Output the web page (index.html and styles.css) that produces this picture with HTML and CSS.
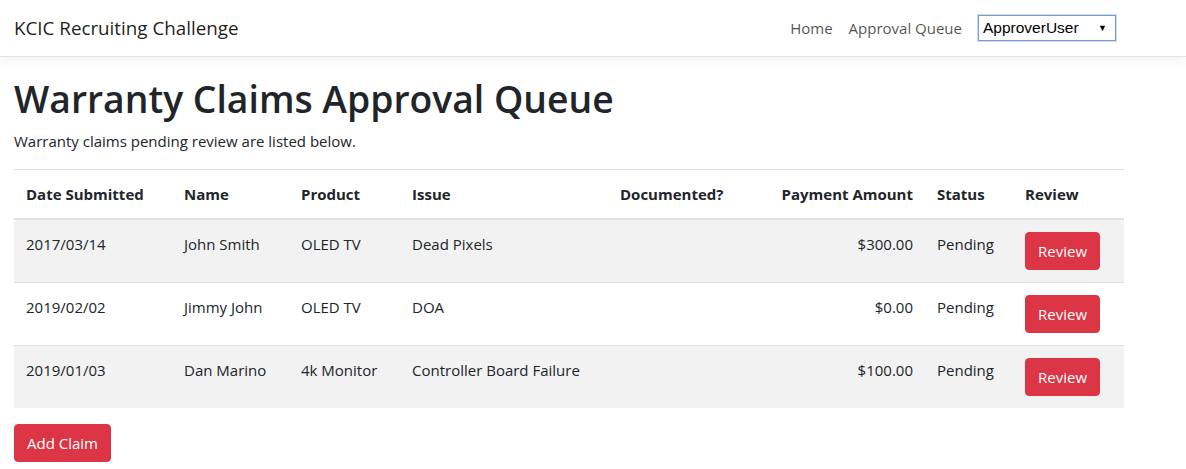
FILE: index.html
```html
<!DOCTYPE html>
<html lang="en">
<head>
<meta charset="utf-8">
<title>Warranty Claims Approval Queue</title>
<link rel="stylesheet" href="styles.css">
</head>
<body>
<header class="navbar">
  <a class="brand" href="#">KCIC Recruiting Challenge</a>
  <nav class="nav">
    <a class="nav-link" href="#">Home</a>
    <a class="nav-link" href="#">Approval Queue</a>
    <div class="user-select">
      <span class="user-select-value">ApproverUser</span>
      <span class="user-select-arrow">▼</span>
    </div>
  </nav>
</header>
<main class="main">
  <h1 class="title">Warranty Claims Approval Queue</h1>
  <p class="lead">Warranty claims pending review are listed below.</p>
  <table class="claims">
    <colgroup>
      <col class="c-date"><col class="c-name"><col class="c-product"><col class="c-issue">
      <col class="c-doc"><col class="c-amount"><col class="c-status"><col class="c-review">
    </colgroup>
    <thead>
      <tr>
        <th>Date Submitted</th><th>Name</th><th>Product</th><th>Issue</th>
        <th>Documented?</th><th class="num">Payment Amount</th><th>Status</th><th>Review</th>
      </tr>
    </thead>
    <tbody>
      <tr>
        <td>2017/03/14</td><td>John Smith</td><td>OLED TV</td><td>Dead Pixels</td>
        <td></td><td class="num">$300.00</td><td>Pending</td><td><button class="btn">Review</button></td>
      </tr>
      <tr>
        <td>2019/02/02</td><td>Jimmy John</td><td>OLED TV</td><td>DOA</td>
        <td></td><td class="num">$0.00</td><td>Pending</td><td><button class="btn">Review</button></td>
      </tr>
      <tr>
        <td>2019/01/03</td><td>Dan Marino</td><td>4k Monitor</td><td>Controller Board Failure</td>
        <td></td><td class="num">$100.00</td><td>Pending</td><td><button class="btn">Review</button></td>
      </tr>
    </tbody>
  </table>
  <button class="btn">Add Claim</button>
</main>
</body>
</html>
```

FILE: styles.css
```css
* { box-sizing: border-box; }
html, body { margin: 0; padding: 0; }
body {
  font-family: "Open Sans", "Noto Sans", sans-serif;
  font-size: 15px;
  line-height: 24px;
  color: #212529;
  background: #fff;
}
.navbar {
  height: 57px;
  display: flex;
  align-items: center;
  justify-content: space-between;
  padding: 0 70px 0 14px;
  border-bottom: 1px solid #dee2e6;
  box-shadow: 0 4px 12px rgba(0,0,0,.05);
}
.brand {
  font-size: 18.8px;
  color: rgba(0,0,0,.9);
  text-decoration: none;
  line-height: 30px;
}
.nav { display: flex; align-items: center; }
.nav-link {
  color: rgba(0,0,0,.7);
  text-decoration: none;
  padding: 0 8px;
  font-size: 15px;
}
.user-select {
  margin-left: 8px;
  width: 138px;
  height: 26px;
  border: 1px solid #7a9bd9;
  box-shadow: 0 0 0 1px rgba(110,150,230,.35);
  display: flex;
  align-items: center;
  justify-content: space-between;
  padding: 0 8px 0 4px;
  font-family: "Liberation Sans", Arial, sans-serif;
  font-size: 15.5px;
  color: #000;
}
.user-select-arrow { font-size: 9px; }
.main { padding: 16px 14px 0; }
.title {
  margin: 2px 0 6px;
  font-size: 37.3px;
  font-weight: 600;
  line-height: 48px;
}
.lead { margin: 0 0 16px; }
.claims {
  width: 1110px;
  table-layout: fixed;
  border-collapse: collapse;
  margin-bottom: 16px;
}
.c-date { width: 158px; }
.c-name { width: 117px; }
.c-product { width: 111px; }
.c-issue { width: 208px; }
.c-doc { width: 147px; }
.c-amount { width: 170px; }
.c-status { width: 88px; }
.c-review { width: 111px; }
.claims th, .claims td {
  padding: 12px;
  text-align: left;
  vertical-align: top;
  border-top: 1px solid #dee2e6;
}
.claims th { font-weight: 700; border-bottom: 2px solid #dee2e6; }
.claims tbody tr:nth-child(odd) { background: #f2f2f2; }
.claims .num { text-align: right; }
.btn {
  font-family: inherit;
  font-size: 15px;
  line-height: 24px;
  padding: 6px 12px;
  border: 1px solid #dc3545;
  background: #dc3545;
  color: #fff;
  border-radius: 4px;
  cursor: pointer;
}
```
